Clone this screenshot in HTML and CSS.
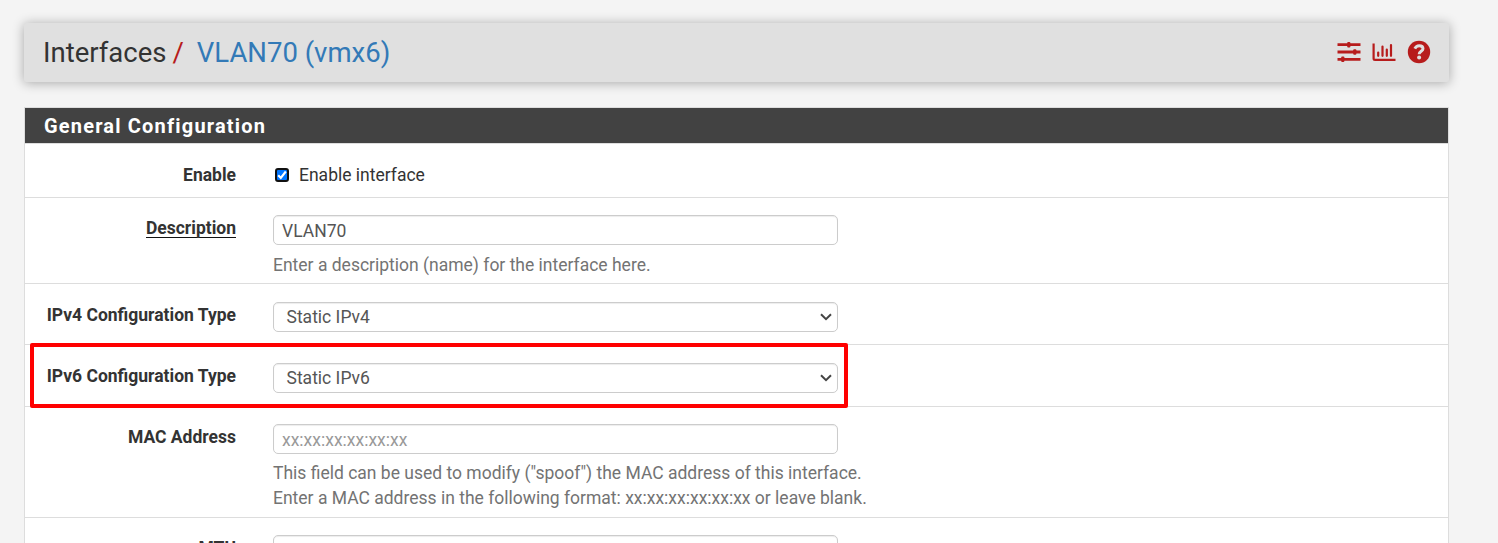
FILE: index.html
```html
<!DOCTYPE html>
<html lang="en">
<head>
<meta charset="utf-8">
<title>Interfaces / VLAN70 (vmx6)</title>
<link rel="stylesheet" href="styles.css">
</head>
<body>
<header class="page-header">
  <h1 class="breadcrumb"><span>Interfaces</span><span class="slash">/</span><a class="crumb">VLAN70 (vmx6)</a></h1>
  <nav class="actions">
    <svg class="icon" width="24" height="22" viewBox="0 0 24 22"><path d="M0.5 3.7H23.5M0.5 11H23.5M0.5 18.3H23.5" stroke="currentColor" stroke-width="2.8"/><rect x="10.2" y="1" width="3.2" height="5.6" rx="1" fill="currentColor"/><rect x="16.2" y="8.2" width="3.2" height="5.6" rx="1" fill="currentColor"/><rect x="4.2" y="15.4" width="3.2" height="5.6" rx="1" fill="currentColor"/></svg>
    <svg class="icon" width="24" height="22" viewBox="0 0 24 22"><path d="M1.6 2.5V17.4Q1.6 18.8 3 18.8H23.5" fill="none" stroke="currentColor" stroke-width="2.2"/><path d="M6.2 11.5V14.8M10.5 5.5V14.8M14.8 8.5V14.8M19 4V14.8" stroke="currentColor" stroke-width="2.2" stroke-linecap="round"/></svg>
    <svg class="icon" width="24" height="24" viewBox="0 0 24 24"><circle cx="12" cy="12" r="11.2" fill="currentColor"/><path d="M7.8 8.7C8.7 6.8 10.2 5.7 12.2 5.7C14.4 5.7 16 6.9 16 8.7C16 11.2 12.1 11.4 12.1 14.2" fill="none" stroke="#e0e0e0" stroke-width="2.9"/><circle cx="12.1" cy="17.6" r="2" fill="#e0e0e0"/></svg>
  </nav>
</header>
<main class="panel">
  <h2 class="panel-title">General Configuration</h2>
  <div class="row row-enable">
    <span class="label">Enable</span>
    <div class="field"><label class="check-line"><span class="checkbox"><svg width="10" height="10" viewBox="0 0 10 10"><path d="M1.2 5.2L3.8 7.9L8.8 1.5" fill="none" stroke="#fff" stroke-width="2.1"/></svg></span>Enable interface</label></div>
  </div>
  <div class="row row-description">
    <span class="label"><span class="required">Description</span></span>
    <div class="field"><div class="control">VLAN70</div><p class="help">Enter a description (name) for the interface here.</p></div>
  </div>
  <div class="row row-ipv4">
    <span class="label">IPv4 Configuration Type</span>
    <div class="field"><div class="control select">Static IPv4<svg width="12" height="8" viewBox="0 0 12 8"><path d="M1 1.3L6 6.2L11 1.3" fill="none" stroke="#444" stroke-width="2"/></svg></div></div>
  </div>
  <div class="row row-ipv6">
    <span class="label">IPv6 Configuration Type</span>
    <div class="field"><div class="control select">Static IPv6<svg width="12" height="8" viewBox="0 0 12 8"><path d="M1 1.3L6 6.2L11 1.3" fill="none" stroke="#444" stroke-width="2"/></svg></div></div>
    <div class="highlight"></div>
  </div>
  <div class="row row-mac">
    <span class="label">MAC Address</span>
    <div class="field"><div class="control placeholder">xx:xx:xx:xx:xx:xx</div><p class="help">This field can be used to modify ("spoof") the MAC address of this interface.<br>Enter a MAC address in the following format: xx:xx:xx:xx:xx:xx or leave blank.</p></div>
  </div>
  <div class="row row-mtu">
    <span class="label">MTU</span>
    <div class="field"><div class="control"></div></div>
  </div>
</main>
</body>
</html>
```
FILE: styles.css
```css
* { box-sizing: border-box; }
html, body { height: 100%; }
body {
  margin: 0;
  padding: 23px 49px 0 24px;
  overflow: hidden;
  background: #f4f4f4;
  color: #333;
  font: 17.5px/25px Roboto, sans-serif;
}
.page-header {
  display: flex;
  align-items: center;
  justify-content: space-between;
  height: 59px;
  padding: 0 18px 0 19px;
  border-radius: 2px;
  background: #e0e0e0;
  box-shadow: 0 1px 12px rgba(0, 0, 0, .32);
}
.breadcrumb {
  display: flex;
  margin: 0;
  font-size: 27.5px;
  line-height: 32px;
  font-weight: 400;
}
.slash { margin: 0 13px 0 6px; color: #b71c1c; }
.crumb { color: #337ab7; }
.actions { display: flex; align-items: center; gap: 11px; padding-bottom: 1px; color: #b71c1c; }
.icon { display: block; }
.panel {
  margin-top: 25px;
  border: 1px solid #ddd;
  background: #fff;
}
.panel-title {
  height: 35px;
  margin: 0;
  padding-left: 19px;
  background: #424242;
  color: #fff;
  font-size: 20px;
  line-height: 36px;
  font-weight: 700;
  letter-spacing: 1.18px;
}
.row {
  position: relative;
  display: grid;
  grid-template-columns: 211px 1fr;
  column-gap: 37px;
  border-top: 1px solid #ddd;
}
.row-enable { height: 54px; }
.row-description { height: 86px; }
.row-ipv4 { height: 61px; }
.row-ipv6 { height: 62px; }
.row-mac { height: 111px; }
.row-mtu { height: 61px; }
.label { padding-top: 18px; text-align: right; font-weight: 700; }
.row-enable .label, .row-ipv4 .label, .row-ipv6 .label { padding-top: 19px; }
.required { display: inline-block; height: 22px; border-bottom: 1px solid #111; }
.field { padding-top: 17px; }
.row-ipv4 .field, .row-ipv6 .field { padding-top: 18px; }
.check-line { display: flex; align-items: center; gap: 10px; padding: 2px 0 0 2px; }
.checkbox {
  display: flex;
  align-items: center;
  justify-content: center;
  width: 14px;
  height: 14px;
  margin-bottom: 1px;
  border: 2px solid #101010;
  border-radius: 3px;
  background: #0075ff;
}
.checkbox svg { flex: none; }
.control {
  display: flex;
  align-items: center;
  width: 565px;
  height: 30px;
  padding: 2px 8px 0;
  border: 1px solid #ccc;
  border-radius: 5px;
  background: #fff;
  box-shadow: inset 0 1px 1px rgba(0, 0, 0, .075);
  color: #555;
}
.select { justify-content: space-between; padding: 0 5px 0 12.5px; }
.placeholder { color: #999; }
.help { margin: 7px 0 0; color: #737373; }
.row-description .help { margin-top: 8px; }
.highlight {
  position: absolute;
  left: 5px;
  top: -2px;
  width: 818px;
  height: 65px;
  border: 4px solid #f00;
  border-radius: 2px;
  z-index: 1;
}
```
